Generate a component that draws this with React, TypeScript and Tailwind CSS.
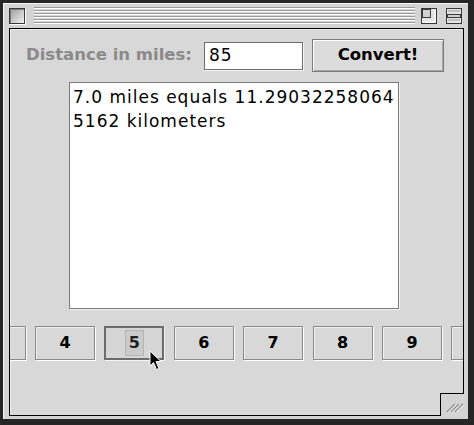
import React from "react";

// the first and last buttons only peek in at the edges, their labels are off-screen
const NUMBERS = ["", "4", "5", "6", "7", "8", "9", ""];

function CloseBox() {
  return (
    <div className="w-4 h-4 shrink-0 border border-[#3a3a3a] bg-gradient-to-br from-[#9c9c9c] to-[#f2f2f2] shadow-[1px_1px_0_#ffffff,inset_1px_1px_0_#7a7a7a]" />
  );
}

function ZoomBox() {
  return (
    <svg width="16" height="16" viewBox="0 0 16 16" className="shrink-0">
      <rect x="0.5" y="0.5" width="15" height="15" fill="#e4e4e4" stroke="#3a3a3a" />
      <rect x="1.5" y="1.5" width="8" height="8" fill="#d0d0d0" stroke="#3a3a3a" />
      <line x1="2" y1="14" x2="14" y2="14" stroke="#ffffff" />
      <line x1="14" y1="2" x2="14" y2="14" stroke="#ffffff" />
    </svg>
  );
}

function CollapseBox() {
  return (
    <svg width="16" height="16" viewBox="0 0 16 16" className="shrink-0">
      <rect x="0.5" y="0.5" width="15" height="15" fill="#e4e4e4" stroke="#3a3a3a" />
      <rect x="1.5" y="6.5" width="13" height="3" fill="#d0d0d0" stroke="#3a3a3a" />
      <line x1="2" y1="3" x2="14" y2="3" stroke="#9a9a9a" />
      <line x1="2" y1="12" x2="14" y2="12" stroke="#9a9a9a" />
    </svg>
  );
}

function Cursor() {
  return (
    <svg width="13" height="21" viewBox="0 0 13 21" className="absolute left-[43px] top-[22px]">
      <path d="M1 1 L1 16 L4.5 12.5 L7.5 19.5 L10 18.5 L7 11.5 L12 11.5 Z" fill="#000" stroke="#fff" strokeWidth="1" />
    </svg>
  );
}

function GrowBox() {
  return (
    <div className="absolute right-[4px] bottom-[3px] w-[24px] h-[23px] border-t border-l border-black bg-[#d4d4d4]">
      <svg width="23" height="22" viewBox="0 0 23 22" className="absolute left-0 top-0">
        {[0, 4, 8].map((o) => (
          <g key={o}>
            <line x1={6 + o} y1={18} x2={14 + o} y2={10} stroke="#8a8a8a" strokeWidth="1.2" />
            <line x1={7 + o} y1={18.5} x2={15 + o} y2={10.5} stroke="#ffffff" strokeWidth="0.8" />
          </g>
        ))}
      </svg>
    </div>
  );
}

export default function App() {
  const font = { fontFamily: '"DejaVu Sans", "Liberation Sans", sans-serif' };

  return (
    <div className="relative w-[474px] h-[425px] flex flex-col bg-[#d4d4d4] border-l-[3px] border-t-[3px] border-r-[6px] border-b-[6px] border-[#262626] shadow-[inset_1px_1px_0_#f4f4f4]" style={font}>
      {/* title bar */}
      <div className="h-[25px] shrink-0 flex items-center pl-[6px] pr-[6px]">
        <CloseBox />
        <div className="flex-1 ml-[9px] mr-[6px] h-[17px] bg-[repeating-linear-gradient(to_bottom,#9a9a9a_0px,#9a9a9a_1px,#ffffff_1px,#ffffff_2px,#d6d6d6_2px,#d6d6d6_3px)]" />
        <ZoomBox />
        <div className="w-[9px]" />
        <CollapseBox />
      </div>

      {/* content */}
      <div className="relative flex-1 ml-[6px] mr-[4px] mb-[3px] border border-black bg-[#d8d8d8] overflow-hidden flex flex-col shadow-[inset_1px_1px_0_#ededed]">
        <div className="flex items-center pt-[10px] pl-[16px]">
          <span className="w-[168px] text-[16.5px] font-bold text-[#8a8a8a] leading-none">Distance in miles:</span>
          <div className="ml-[10px] w-[99px] h-[28px] border border-[#6e6e6e] bg-white flex items-center pl-[4px] text-[17px] tracking-[1px] text-black shadow-[1px_1px_0_#f6f6f6]">
            85
          </div>
          <div className="ml-[9px] w-[132px] h-[33px] border border-[#7c7c7c] bg-[#dcdcdc] flex items-center justify-center text-[16.5px] font-bold text-black shadow-[inset_1px_1px_0_#ffffff,inset_-1px_-1px_0_#a8a8a8]">
            Convert!
          </div>
        </div>

        <div className="ml-[59px] mt-[10px] w-[330px] h-[227px] border border-[#7a7a7a] bg-white pl-[3px] pt-[2px] text-[17px] leading-[24px] tracking-[1px] text-black shadow-[1px_1px_0_#f4f4f4]">
          <p>7.0 miles equals 11.29032258064</p>
          <p>5162 kilometers</p>
        </div>

        <div className="flex gap-[9.4px] ml-[-44.4px] mt-[17px]">
          {NUMBERS.map((n, i) => {
            const focused = n === "5";
            return (
              <div
                key={i}
                className={
                  focused
                    ? "relative w-[60px] h-[34px] shrink-0 border-2 border-[#6c6c6c] bg-[#d6d6d6] flex items-center justify-center text-[16px] font-bold text-[#222] shadow-[1px_1px_0_#f4f4f4]"
                    : "relative w-[60px] h-[34px] shrink-0 border border-[#8a8a8a] bg-[#d8d8d8] flex items-center justify-center text-[16px] font-bold text-black shadow-[1px_1px_0_#ffffff,inset_1px_1px_0_#f0f0f0]"
                }
              >
                {focused ? (
                  <span className="px-[3px] border border-[#b4b4b4] bg-[#cbcbcb] leading-[24px]">5</span>
                ) : (
                  n
                )}
                {focused && <Cursor />}
              </div>
            );
          })}
        </div>
      </div>

      <GrowBox />
    </div>
  );
}
